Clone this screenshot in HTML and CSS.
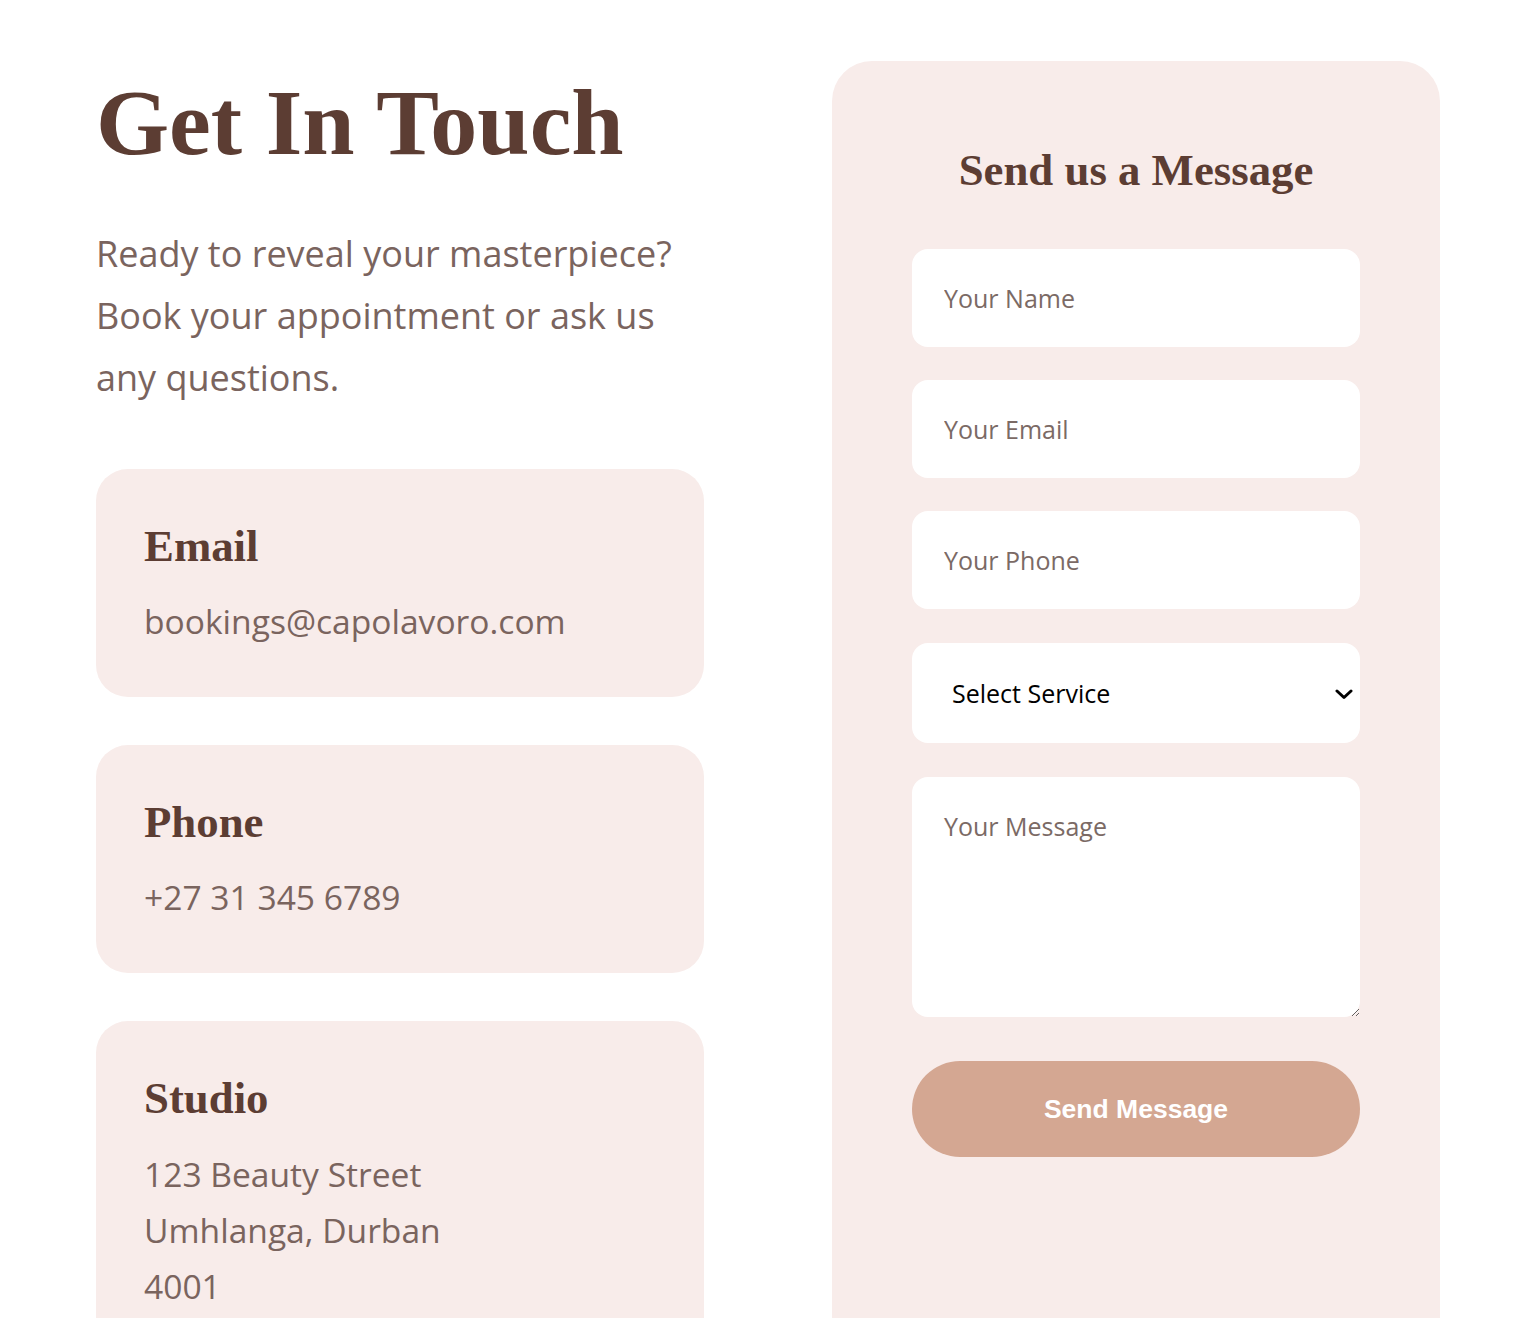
FILE: index.html
```html
<!DOCTYPE html>
<html lang="en">
<head>
<meta charset="utf-8">
<title>Get In Touch</title>
<link rel="stylesheet" href="styles.css">
</head>
<body>
<section class="contact">
  <div class="info">
    <h1 class="title">Get In Touch</h1>
    <p class="intro">Ready to reveal your masterpiece? Book your appointment or ask us any questions.</p>
    <div class="cards">
      <div class="card">
        <h3 class="card-title">Email</h3>
        <p class="card-text">bookings@capolavoro.com</p>
      </div>
      <div class="card">
        <h3 class="card-title">Phone</h3>
        <p class="card-text">+27 31 345 6789</p>
      </div>
      <div class="card">
        <h3 class="card-title">Studio</h3>
        <p class="card-text">123 Beauty Street<br>Umhlanga, Durban<br>4001</p>
      </div>
    </div>
  </div>
  <div class="form-card">
    <h2 class="form-title">Send us a Message</h2>
    <form class="form">
      <input class="field" type="text" placeholder="Your Name">
      <input class="field" type="email" placeholder="Your Email">
      <input class="field" type="tel" placeholder="Your Phone">
      <div class="select-wrap">
        <select class="field select">
          <option>Select Service</option>
        </select>
        <svg class="chevron" width="18" height="11" viewBox="0 0 18 11"><path d="M2 2 L9 8.5 L16 2" fill="none" stroke="#000" stroke-width="3" stroke-linecap="round" stroke-linejoin="round"/></svg>
      </div>
      <textarea class="field area" rows="5" placeholder="Your Message"></textarea>
      <button class="send" type="button">Send Message</button>
    </form>
  </div>
</section>
</body>
</html>
```
FILE: styles.css
```css
* { box-sizing: border-box; }
body {
  margin: 0;
  background: #ffffff;
  font-family: "Open Sans", "Noto Sans", sans-serif;
}
.contact {
  display: grid;
  grid-template-columns: 608px 608px;
  column-gap: 128px;
  justify-content: center;
  padding-top: 61px;
}
.title {
  margin: 5px 0 0;
  font: 700 94px/1.2 "Liberation Serif", serif;
  color: #5c3d33;
}
.intro {
  margin: 44px 0 60px;
  font-size: 36px;
  line-height: 62px;
  color: #7a645e;
}
.cards {
  display: flex;
  flex-direction: column;
  gap: 48px;
}
.card {
  background: #f8ecea;
  border-radius: 32px;
  padding: 48px;
}
.card-title {
  margin: 0;
  font: 700 44.8px/1.3 "Liberation Serif", serif;
  color: #5c3d33;
}
.card-text {
  margin: 18px 0 0;
  font-size: 33.6px;
  line-height: 56px;
  color: #7a645e;
}
.form-card {
  background: #f8ecea;
  border-radius: 40px;
  padding: 80px;
}
.form-title {
  margin: 0 0 50px;
  text-align: center;
  font: 700 44.8px/1.3 "Liberation Serif", serif;
  color: #5c3d33;
}
.form {
  display: flex;
  flex-direction: column;
  gap: 33px;
}
.field {
  display: block;
  width: 100%;
  height: 98px;
  border: 0;
  border-radius: 16px;
  background: #ffffff;
  padding: 0 32px;
  font-family: "Open Sans", "Noto Sans", sans-serif;
  font-size: 25px;
  color: #5c3d33;
  outline: none;
}
.field::placeholder {
  color: #7b6a65;
  opacity: 1;
}
.select-wrap {
  position: relative;
  margin: 1px 0;
}
.select {
  appearance: none;
  -webkit-appearance: none;
  height: 100px;
  padding-left: 40px;
  color: #000000;
}
.chevron {
  position: absolute;
  right: 7px;
  top: 46px;
  pointer-events: none;
}
.area {
  height: 240px;
  padding: 32px;
  resize: vertical;
}
.send {
  margin-top: 11px;
  height: 96px;
  border: 0;
  border-radius: 48px;
  background: #d4a792;
  color: #ffffff;
  font: 700 26.5px "Liberation Sans", Arial, sans-serif;
  cursor: pointer;
}
```
